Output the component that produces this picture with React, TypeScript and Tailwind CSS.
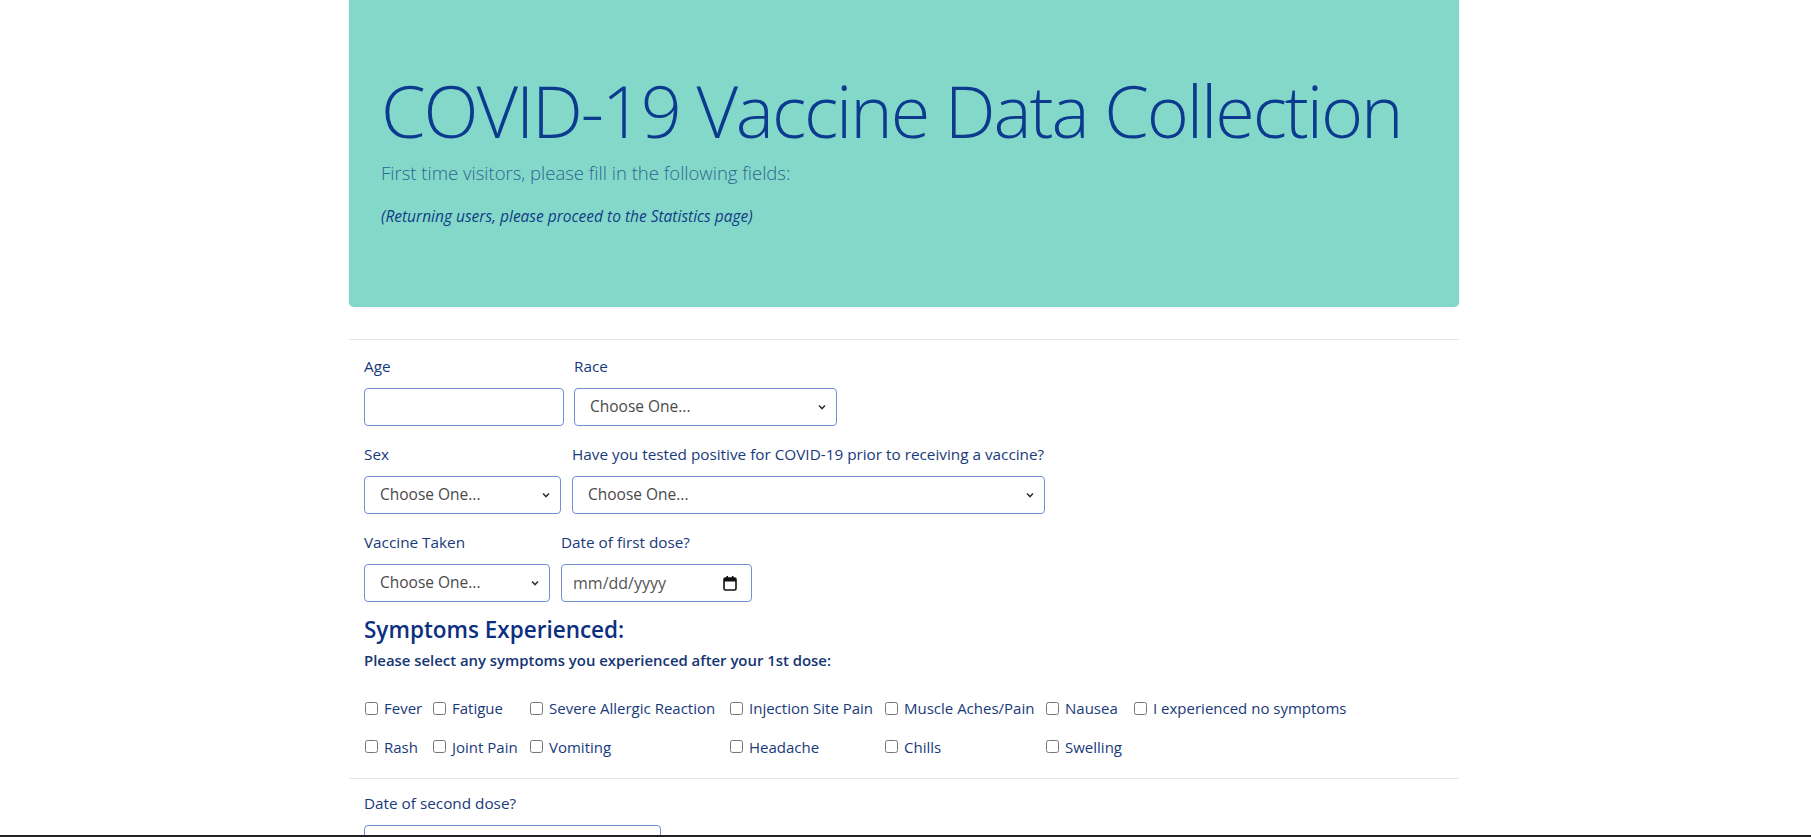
import React from "react";

const font = { fontFamily: '"Open Sans", "Noto Sans", sans-serif' };

function Chevron() {
  return (
    <svg width="10" height="10" viewBox="0 0 10 10" className="absolute right-[10px] top-1/2 -translate-y-1/2">
      <path d="M2 3.5 L5 6.5 L8 3.5" fill="none" stroke="#333" strokeWidth="1.6" />
    </svg>
  );
}

function Select({ w }: { w: string }) {
  return (
    <div className={`relative h-[38px] ${w}`}>
      <select className="h-full w-full appearance-none rounded-[4px] border border-[#7390d0] bg-white pl-[15px] text-[15.5px] text-[#4a4a4a] outline-none">
        <option>Choose One...</option>
      </select>
      <Chevron />
    </div>
  );
}

function DateInput({ w }: { w: string }) {
  return (
    <div className={`flex h-[38px] items-center justify-between rounded-[4px] border border-[#7390d0] bg-white pl-[11px] pr-[14px] ${w}`}>
      <span className="text-[16px] text-[#555]">mm/dd/yyyy</span>
      <svg width="14" height="16" viewBox="0 0 14 16">
        <rect x="1" y="3" width="12" height="12" rx="1.5" fill="none" stroke="#111" strokeWidth="1.6" />
        <rect x="1" y="3" width="12" height="3.5" fill="#111" />
        <rect x="3.5" y="1" width="1.6" height="3" fill="#111" />
        <rect x="8.9" y="1" width="1.6" height="3" fill="#111" />
      </svg>
    </div>
  );
}

function Field({ label, children }: { label: string; children: React.ReactNode }) {
  return (
    <div className="flex flex-col">
      <label className="mb-[10px] h-[24px] text-[15.3px] leading-[24px] text-[#183a7a]">{label}</label>
      {children}
    </div>
  );
}

function Check({ label }: { label: string }) {
  return (
    <label className="flex items-center gap-[6px] text-[15px] text-[#183a7a]">
      <input type="checkbox" className="m-0 h-[13px] w-[13px]" />
      <span>{label}</span>
    </label>
  );
}

export default function App() {
  const row1 = ["Fever", "Fatigue", "Severe Allergic Reaction", "Injection Site Pain", "Muscle Aches/Pain", "Nausea", "I experienced no symptoms"];
  const row2 = ["Rash", "Joint Pain", "Vomiting", "Headache", "Chills", "Swelling", ""];
  return (
    <div className="min-h-[837px] w-full bg-white" style={font}>
      <div className="ml-[349px] w-[1110px]">
        <div className="h-[307px] rounded-b-[5px] bg-[#84d8c9] px-[32px] pt-[67px] shadow-[0_0_2px_rgba(0,0,0,0.15)]">
          <h1 className="text-[72px] font-light leading-[86px] tracking-[-2.1px] text-[#0b3a8e]">COVID-19 Vaccine Data Collection</h1>
          <p className="mt-[6px] text-[18.5px] font-light leading-[28px] text-[#2c6790]">First time visitors, please fill in the following fields:</p>
          <p className="mt-[19px] text-[15.5px] italic leading-[20px] text-[#123d86]">(Returning users, please proceed to the Statistics page)</p>
        </div>
        <hr className="mt-[32px] border-t border-[#e6e6e6]" />
        <div className="px-[15px] pt-[14px]">
          <div className="flex gap-[10px]">
            <Field label="Age">
              <input className="h-[38px] w-[200px] rounded-[4px] border border-[#7390d0] bg-white outline-none" />
            </Field>
            <Field label="Race">
              <Select w="w-[263px]" />
            </Field>
          </div>
          <div className="mt-[16px] flex gap-[11px]">
            <Field label="Sex">
              <Select w="w-[197px]" />
            </Field>
            <Field label="Have you tested positive for COVID-19 prior to receiving a vaccine?">
              <Select w="w-[473px]" />
            </Field>
          </div>
          <div className="mt-[16px] flex gap-[11px]">
            <Field label="Vaccine Taken">
              <Select w="w-[186px]" />
            </Field>
            <Field label="Date of first dose?">
              <DateInput w="w-[191px]" />
            </Field>
          </div>
          <h4 className="mt-[13px] text-[22.5px] font-semibold leading-[29px] text-[#0d2f80]">Symptoms Experienced:</h4>
          <p className="mt-[6px] text-[14.9px] font-semibold leading-[20px] text-[#153574]">Please select any symptoms you experienced after your 1st dose:</p>
          <div className="mt-[27px] grid grid-cols-[68px_97px_200px_155px_161px_88px_auto] gap-y-[16px] pl-[1px]">
            {row1.map((l) => (
              <Check key={l} label={l} />
            ))}
            {row2.map((l, i) => (l ? <Check key={l} label={l} /> : <div key={i} />))}
          </div>
        </div>
        <hr className="mt-[20px] border-t border-[#e6e6e6]" />
        <div className="px-[15px] pt-[12px]">
          <Field label="Date of second dose?">
            <div className="h-[38px] w-[297px] rounded-[4px] border border-[#7390d0] bg-white" />
          </Field>
        </div>
      </div>
      <div className="fixed bottom-0 left-0 h-[2px] w-full bg-[#222]" />
    </div>
  );
}
